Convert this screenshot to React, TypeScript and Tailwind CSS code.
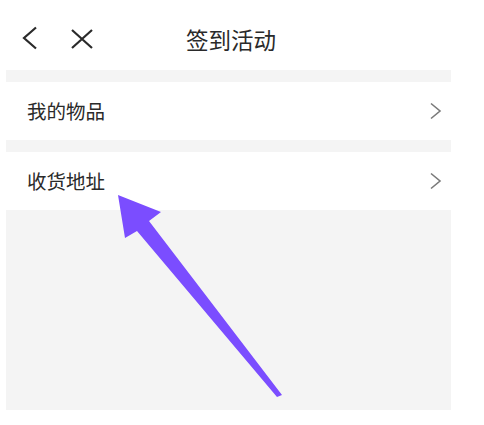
import React from 'react';

const FONT = '"Noto Sans CJK SC", "Noto Sans", sans-serif';

// ─── Row ──────────────────────────────────────────────────────────────────────

function MenuRow({ label }: { label: string }) {
  return (
    <div className="flex h-[58px] items-center justify-between bg-white pl-[21px] pr-[8px]">
      <span className="text-[19.5px] leading-none text-[#2a2a2a]">{label}</span>
      <svg width="14" height="18" viewBox="0 0 14 18" fill="none" stroke="#7a7a7a" strokeWidth="1.6">
        <path d="M2 1.5 L11 9 L2 16.5" />
      </svg>
    </div>
  );
}

export default function App() {
  return (
    <div className="relative h-[425px] w-[484px] overflow-hidden bg-white" style={{ fontFamily: FONT }}>
      {/* header */}
      <div className="relative flex h-[70px] items-center">
        <svg className="absolute left-[21px] top-[26px]" width="18" height="24" viewBox="0 0 18 24" fill="none" stroke="#2a2a2a" strokeWidth="2.2">
          <path d="M15 1.5 L3 12 L15 22.5" />
        </svg>
        <svg className="absolute left-[70px] top-[29px]" width="24" height="20" viewBox="0 0 24 20" fill="none" stroke="#2a2a2a" strokeWidth="2.2">
          <path d="M2 1 L22 19 M22 1 L2 19" />
        </svg>
        <div className="absolute left-[186px] top-[24px] text-[22.5px] leading-[30px] text-[#2a2a2a]">签到活动</div>
      </div>

      {/* list */}
      <div className="ml-[6px] w-[445px] bg-[#f4f4f4] pt-[12px] pb-[200px]">
        <MenuRow label="我的物品" />
        <div className="h-[12px]" />
        <MenuRow label="收货地址" />
      </div>

      {/* annotation arrow */}
      <svg className="pointer-events-none absolute left-0 top-0" width="484" height="425" viewBox="0 0 484 425">
        <polygon
          points="118,195 161,212 149,221 282,395 277,397 137,231 125,238"
          fill="#7b4dff"
        />
      </svg>
    </div>
  );
}
